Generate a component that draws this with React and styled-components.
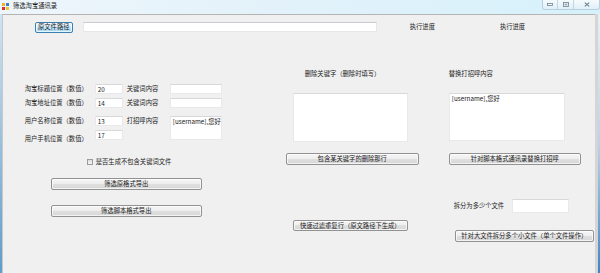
import React from 'react';
import styled, { createGlobalStyle } from 'styled-components';

const GlobalStyle = createGlobalStyle`
  html, body {
    margin: 0;
    padding: 0;
    width: 600px;
    height: 273px;
    overflow: hidden;
    background: #3a86c8;
  }
  * { box-sizing: border-box; }
`;

const Window = styled.div`
  width: 600px;
  height: 273px;
  display: flex;
  flex-direction: column;
  font-family: "Noto Sans CJK SC", "Noto Sans", sans-serif;
  font-size: 6.3px;
  color: #222;
`;

const TitleBar = styled.div`
  height: 14px;
  display: flex;
  align-items: flex-start;
  background: linear-gradient(90deg, #eef6fb 0%, #e4f2fa 40%, #d6f1fb 100%);
`;

const AppIcon = styled.div`
  width: 7px;
  height: 7px;
  margin: 3px 0 0 2px;
  display: grid;
  grid-template-columns: 1fr 1fr;
  grid-template-rows: 1fr 1fr;
  gap: 1px;
  span:nth-child(1) { background: #f2b41c; }
  span:nth-child(2) { background: #3a7fd0; }
  span:nth-child(3) { background: #d8322a; }
  span:nth-child(4) { background: #f4c531; }
`;

const TitleText = styled.div`
  margin: 2px 0 0 4px;
  line-height: 8px;
  color: #1a1a1a;
`;

const Controls = styled.div`
  margin-left: auto;
  display: flex;
  height: 10px;
  border: 1px solid #b9cfdf;
  border-top: none;
  border-radius: 0 0 3px 3px;
  background: linear-gradient(#f6fbfd, #dff0f8);
`;

const CtrlBtn = styled.div`
  width: ${p => p.$w}px;
  display: flex;
  align-items: center;
  justify-content: center;
  border-left: ${p => (p.$first ? 'none' : '1px solid #c4d6e3')};
`;

const Body = styled.div`
  flex: 1;
  display: flex;
`;

const LeftEdge = styled.div`
  width: 2px;
  background: linear-gradient(#cfe4f3, #8fb8d8 60%, #5f9ccc);
`;

const RightEdge = styled.div`
  width: 6px;
  display: flex;
  span:first-child { width: 3px; background: #d5d5d5; }
  span:last-child { flex: 1; background: linear-gradient(#e8f0f6, #bcd3e4 50%, #3a86c8); }
`;

const Client = styled.div`
  flex: 1;
  background: #f0f0f0;
  border-top: 1px solid #b4b4b4;
  border-left: 1px solid #c8c8c8;
  display: flex;
  flex-direction: column;
`;

const TopRow = styled.div`
  display: flex;
  align-items: center;
  margin-top: 6px;
  height: 12px;
`;

const Button = styled.button`
  font: inherit;
  color: #222;
  padding: 0;
  margin: ${p => p.$m || '0'};
  width: ${p => p.$w}px;
  height: ${p => p.$h || 12}px;
  line-height: 8px;
  border: 1px solid #929292;
  border-radius: 2px;
  background: linear-gradient(#f6f6f6 0%, #eeeeee 45%, #e0e0e0 50%, #d6d6d6 100%);
  text-align: center;
  white-space: nowrap;
  box-shadow: inset 0 0 0 1px rgba(255,255,255,0.7);
`;

const FocusButton = styled(Button)`
  border-color: #3c7fb1;
  background: linear-gradient(#eaf6fd 0%, #d9f0fc 45%, #bee6fd 50%, #a7d9f5 100%);
`;

const PathInput = styled.div`
  width: 294px;
  height: 10px;
  margin-left: 10px;
  background: #fff;
  border: 1px solid #e6e7ea;
  border-top-color: #c9cbd0;
`;

const Label = styled.div`
  line-height: ${p => p.$lh || 8}px;
  margin: ${p => p.$m || '0'};
  white-space: nowrap;
`;

const Columns = styled.div`
  display: flex;
  margin-top: 37px;
`;

const Column = styled.div`
  display: flex;
  flex-direction: column;
  align-items: flex-start;
  width: ${p => p.$w}px;
  margin-left: ${p => p.$ml}px;
`;

const FormGrid = styled.div`
  display: grid;
  grid-template-columns: 70px 28px 47px 52px;
  grid-template-rows: 14px 18px 14px 10px;
  margin-top: 14px;
  align-items: start;
`;

const Field = styled.div`
  background: #fff;
  border: 1px solid #e8e9ec;
  border-top-color: #d6d8dc;
  height: ${p => p.$h || 10}px;
  width: ${p => p.$w ? `${p.$w}px` : '100%'};
  margin: ${p => p.$m || '0'};
  padding: 1px 2px;
  line-height: 7px;
  grid-row: ${p => p.$rows || 'auto'};
  grid-column: ${p => p.$col || 'auto'};
  white-space: nowrap;
`;

const CheckRow = styled.div`
  display: flex;
  align-items: center;
  margin: 18px 0 0 62px;
  height: 7px;
`;

const CheckBox = styled.span`
  width: 6px;
  height: 6px;
  border: 1px solid #9a9b9b;
  background: linear-gradient(#dcdcdc, #f6f6f6);
  margin-right: 3px;
`;

const SplitRow = styled.div`
  display: flex;
  align-items: center;
  margin: 34px 0 0 5px;
`;

const SplitLabel = styled(Label)`
  width: 58px;
`;

const App = () => {
  return (
    <Window>
      <GlobalStyle />
      <TitleBar>
        <AppIcon><span /><span /><span /><span /></AppIcon>
        <TitleText>筛选淘宝通讯录</TitleText>
        <Controls>
          <CtrlBtn $w={14} $first>
            <svg width="6" height="3" viewBox="0 0 6 3"><rect x="0.5" y="0.5" width="5" height="2" fill="#fff" stroke="#6b7f8f" strokeWidth="0.8" /></svg>
          </CtrlBtn>
          <CtrlBtn $w={16}>
            <svg width="6" height="5" viewBox="0 0 6 5"><rect x="0.5" y="0.5" width="5" height="4" fill="#fff" stroke="#6b7f8f" strokeWidth="0.8" /><rect x="1.5" y="1.5" width="3" height="2" fill="#9fb4c4" /></svg>
          </CtrlBtn>
          <CtrlBtn $w={26}>
            <svg width="6" height="5" viewBox="0 0 6 5"><path d="M0.8 0.6 L5.2 4.4 M5.2 0.6 L0.8 4.4" stroke="#6b7f8f" strokeWidth="1.1" /></svg>
          </CtrlBtn>
        </Controls>
      </TitleBar>
      <Body>
        <LeftEdge />
        <Client>
          <TopRow>
            <FocusButton $w={38} $h={11} $m="0 0 0 32px">原文件路径</FocusButton>
            <PathInput />
            <Label $m="0 0 0 33px">执行进度</Label>
            <Label $m="0 0 0 65px">执行进度</Label>
          </TopRow>
          <Columns>
            <Column $w={199} $ml={22}>
              <FormGrid>
                <Label $lh={10}>淘宝标题位置（数值）</Label>
                <Field>20</Field>
                <Label $lh={10} $m="0 0 0 4px">关键词内容</Label>
                <Field />
                <Label $lh={10}>淘宝地址位置（数值）</Label>
                <Field>14</Field>
                <Label $lh={10} $m="0 0 0 4px">关键词内容</Label>
                <Field />
                <Label $lh={10}>用户名称位置（数值）</Label>
                <Field>13</Field>
                <Label $lh={10} $m="0 0 0 4px">打招呼内容</Label>
                <Field $h={24} $rows="3 / span 2" $col="4">[username],您好</Field>
                <Label $lh={10} $m="4px 0 0 0">用户手机位置（数值）</Label>
                <Field $col="2">17</Field>
              </FormGrid>
              <CheckRow>
                <CheckBox />
                <Label>是否生成不包含关键词文件</Label>
              </CheckRow>
              <Button $w={151} $m="13px 0 0 26px">筛选原格式导出</Button>
              <Button $w={151} $m="15px 0 0 26px">筛选脚本格式导出</Button>
            </Column>
            <Column $w={133} $ml={62}>
              <Label $m="0 0 0 19px">删除关键字（删除时填写）</Label>
              <Field $w={115} $h={49} $m="15px 0 0 7px" />
              <Button $w={133} $m="11px 0 0 0">包含某关键字的删除那行</Button>
              <Button $w={115} $h={11} $m="55px 0 0 7px">快速过滤重复行（原文路径下生成）</Button>
            </Column>
            <Column $w={146} $ml={30}>
              <Label>替换打招呼内容</Label>
              <Field $w={116} $h={48} $m="15px 0 0 0">[username],您好</Field>
              <Button $w={132} $m="12px 0 0 0">针对脚本格式通讯录替换打招呼</Button>
              <SplitRow>
                <SplitLabel>拆分为多少个文件</SplitLabel>
                <Field $w={57} $h={14} />
              </SplitRow>
              <Button $w={139} $m="17px 0 0 6px">针对大文件拆分多个小文件（单个文件操作）</Button>
            </Column>
          </Columns>
        </Client>
        <RightEdge><span /><span /></RightEdge>
      </Body>
    </Window>
  );
};

export default App;
